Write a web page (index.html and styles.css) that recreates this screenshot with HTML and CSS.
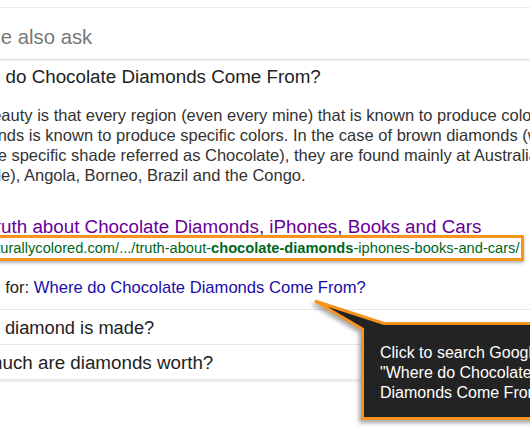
FILE: index.html
```
<!DOCTYPE html>
<html lang="en">
<head>
  <meta charset="UTF-8">
  <title>People also ask</title>
  <link rel="stylesheet" href="styles.css">
</head>

<body>
  <div class="serp">
    <div class="paa">
      <h2 class="paa-head">People also ask</h2>

      <div class="paa-item open">
        <div class="question q-first">Where do Chocolate Diamonds Come From?</div>
        <p class="snippet">
          <span>The beauty is that every region (even every mine) that is known to produce colored</span>
          <span>Diamonds is known to produce specific colors. In the case of brown diamonds (with</span>
          <span>with the specific shade referred as Chocolate), they are found mainly at Australia</span>
          <span class="snippet-last">(Argyle), Angola, Borneo, Brazil and the Congo.</span>
        </p>
        <a class="result-title" href="#">The truth about Chocolate Diamonds, iPhones, Books and Cars</a>
        <div class="cite-box">
          <cite>www.naturallycolored.com/.../truth-about-<b>chocolate-diamonds</b>-iphones-books-and-cars/</cite>
        </div>
        <div class="search-for">Search for: <a href="#">Where do Chocolate Diamonds Come From?</a></div>
      </div>

      <div class="paa-item">
        <div class="question q-second">How a diamond is made?</div>
      </div>
      <div class="paa-item last">
        <div class="question q-third">How much are diamonds worth?</div>
      </div>
    </div>
  </div>

  <div class="callout">
    <svg class="callout-shape" width="240" height="130" viewBox="0 0 240 130">
      <path d="M3 3 L72 25.5 L240 25.5 L240 120.5 L50.5 120.5 L50.5 31 Z" fill="#232323" stroke="#f7941e" stroke-width="3" stroke-linejoin="miter"/>
    </svg>
    <div class="callout-text">Click to search Google for<br>"Where do Chocolate<br>Diamonds Come From?"</div>
  </div>
</body>
</html>
```

FILE: styles.css
```
* {
  box-sizing: border-box;
}
html, body {
  width: 530px;
  height: 443px;
  overflow: hidden;
}
body {
  margin: 0;
  padding: 0;
  background: #fff;
  font-family: 'Liberation Sans', Arial, sans-serif;
  color: #222;
  position: relative;
}

/* the crop starts inside the result column, so the column sits left of the frame */
.serp {
  margin-left: -60px;
  width: 660px;
}
.paa {
  margin-top: 7px;
  border-top: 1px solid #ebebeb;
}
.paa-head {
  margin: 0;
  padding: 19px 0 12px 9px;
  font-size: 20.3px;
  line-height: 20px;
  font-weight: normal;
  color: #777;
  border-bottom: 1px solid #e2e2e2;
  box-shadow: 0 1px 1px rgba(0, 0, 0, 0.05);
}
.paa-item {
  border-bottom: 1px solid #e6e6e6;
  padding: 8px 0 6px;
}
.paa-item.open {
  padding: 7px 0 11px;
}
.paa-item.last {
  box-shadow: 0 2px 2px rgba(0, 0, 0, 0.07);
}
.question {
  font-size: 18.8px;
  line-height: 20px;
  color: #222;
  white-space: nowrap;
}
.q-first {
  padding-left: 5px;
}
.q-second {
  padding-left: 8px;
  font-size: 18.3px;
}
.q-third {
  padding-left: 4px;
}
.snippet {
  margin: 18px 0 0;
  padding-left: 10px;
  font-size: 16.5px;
  line-height: 20px;
  color: #333;
  white-space: nowrap;
}
.snippet span {
  display: block;
}
.snippet .snippet-last {
  padding-left: 8px;
}
.result-title {
  display: block;
  margin-top: 32px;
  padding-left: 12px;
  font-size: 18.8px;
  line-height: 20px;
  color: #660099;
  text-decoration: none;
  white-space: nowrap;
}
.cite-box {
  position: relative;
  width: fit-content;
  margin-top: -2px;
  padding: 0 2px 0 2px;
  border: 3px solid #f7941e;
  box-shadow: 0 2px 3px rgba(0, 0, 0, 0.3);
  background: #fff;
}
.cite-box cite {
  display: block;
  font-style: normal;
  font-size: 14.65px;
  line-height: 20px;
  color: #006621;
  white-space: nowrap;
}
.cite-box b {
  font-weight: bold;
}
.search-for {
  margin-top: 17px;
  padding-left: 8px;
  font-size: 16.6px;
  line-height: 20px;
  color: #222;
  white-space: nowrap;
}
.search-for a {
  color: #1a0dab;
  text-decoration: none;
}

/* callout over the results */
.callout {
  position: absolute;
  left: 312px;
  top: 298px;
  width: 240px;
  height: 130px;
}
.callout-shape {
  display: block;
  filter: drop-shadow(-2px 3px 2px rgba(0, 0, 0, 0.35));
}
.callout-text {
  position: absolute;
  left: 68px;
  top: 44.5px;
  font-size: 16px;
  line-height: 20px;
  color: #fff;
  white-space: nowrap;
}
```
